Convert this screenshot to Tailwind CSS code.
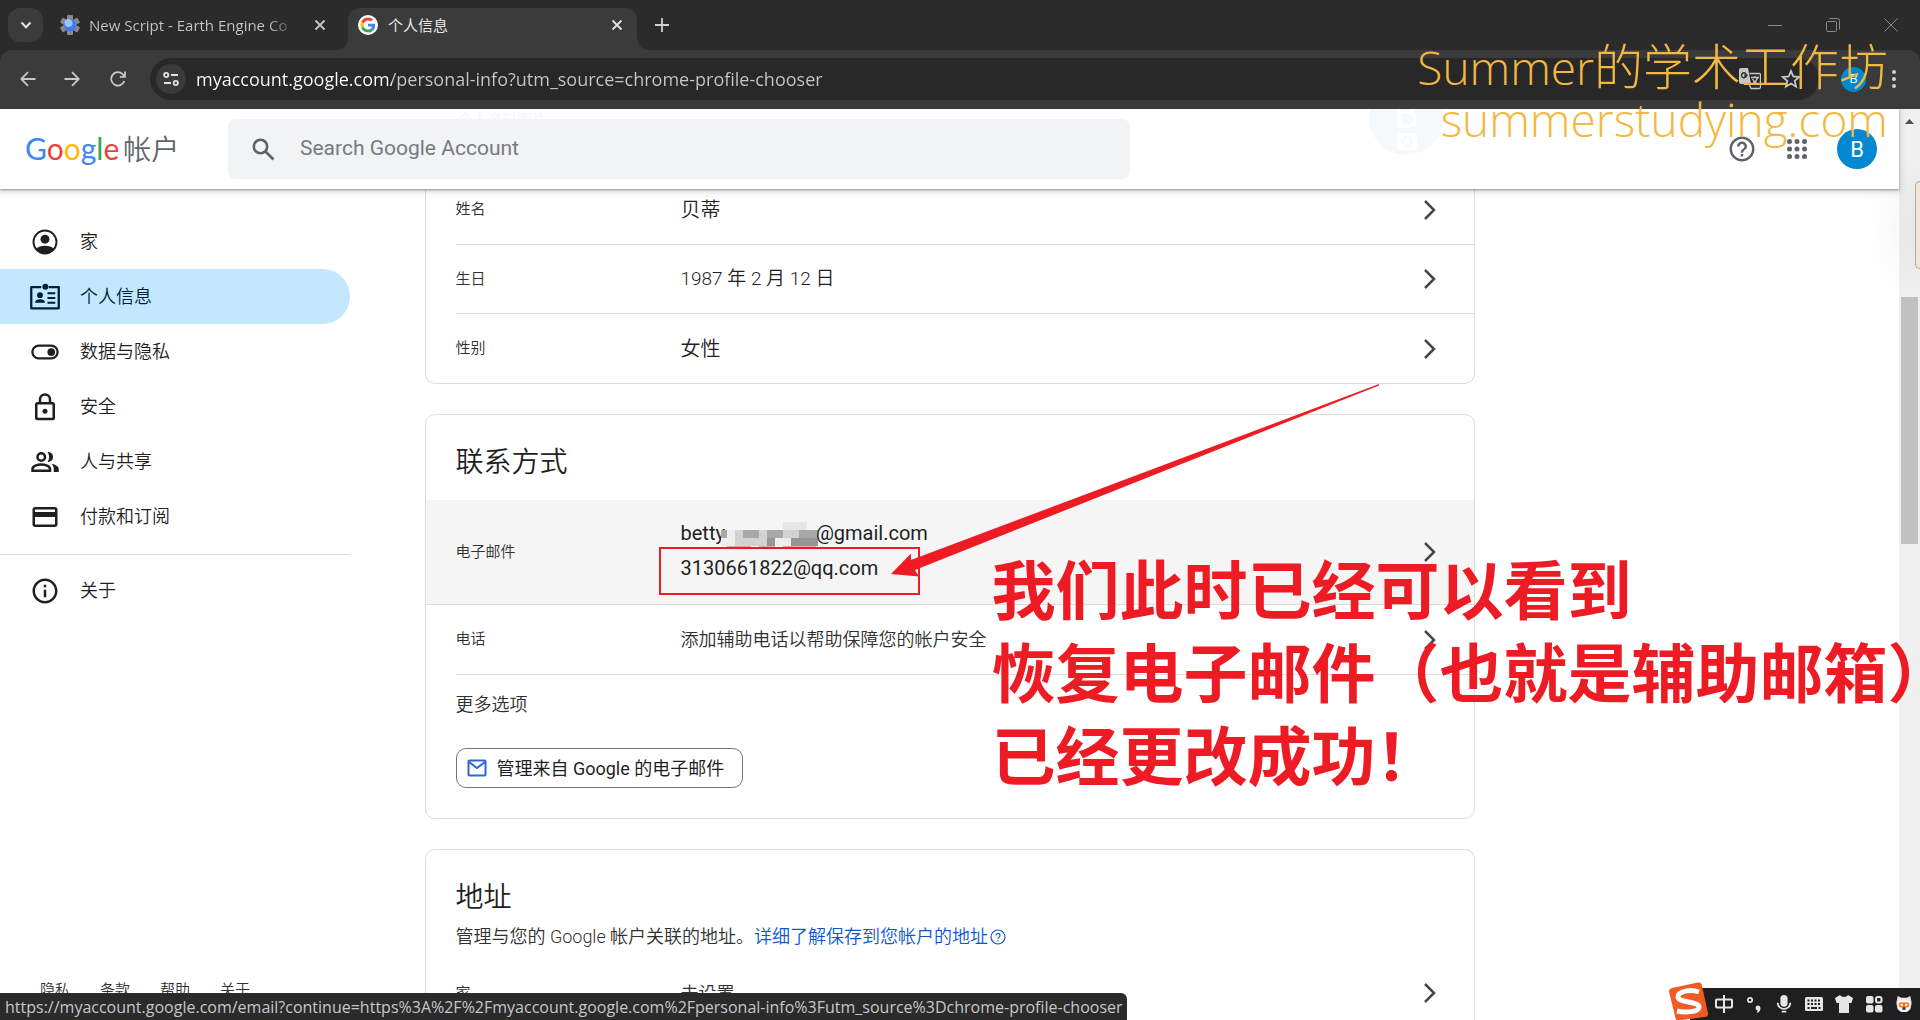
<!DOCTYPE html>
<html lang="zh-CN">
<head>
<meta charset="utf-8">
<title>个人信息</title>
<script src="https://cdn.jsdelivr.net/npm/@tailwindcss/browser@4"></script>
</head>
<body class="relative flex h-screen flex-col overflow-hidden bg-white font-[Roboto,'Noto_Sans_CJK_SC',sans-serif] text-[#1f1f1f]">

<!-- Browser chrome -->
<div class="shrink-0 bg-[#2b2b2b] font-['Open_Sans','Noto_Sans_CJK_SC',sans-serif]">
  <div class="flex h-[50px] items-stretch pl-2">
    <button aria-label="搜索标签页" class="mt-2 flex h-[34px] w-[35px] items-center justify-center rounded-xl bg-[#3b3b3b]">
      <svg class="size-3" viewBox="0 0 12 12" fill="none" stroke="#e3e3e3" stroke-width="2"><path d="M1.5 3.5 6 8.2l4.500-4.700"/></svg>
    </button>
    <div class="flex w-[305px] items-center pr-[22px] pl-4">
      <svg class="size-[22px] shrink-0" viewBox="0 0 22 22"><g fill="#8b8b8b"><rect x="8" y="1" width="6" height="20" rx="1"/><rect x="8" y="1" width="6" height="20" rx="1" transform="rotate(60 11 11)"/><rect x="8" y="1" width="6" height="20" rx="1" transform="rotate(120 11 11)"/></g><circle cx="11" cy="11" r="6.500" fill="#3f7de8"/><circle cx="9.500" cy="9" r="4" fill="#9cc3fb"/></svg>
      <span class="ml-2 w-[210px] overflow-hidden bg-linear-to-r from-[#c7c7c7] from-85% to-[#2b2b2b] bg-clip-text text-[15px] whitespace-nowrap text-transparent">New Script - Earth Engine Co</span>
      <button aria-label="关闭标签页" class="ml-auto"><svg class="size-3" viewBox="0 0 12 12" stroke="#c7c7c7" stroke-width="1.800"><path d="M1.500 1.500l9 9M10.500 1.500l-9 9"/></svg></button>
    </div>
    <div class="relative mt-2 flex w-[289px] items-center rounded-t-xl bg-[#3b3b3b] pr-3.5 pb-2 pl-2.5">
      <svg class="absolute bottom-0 -left-3 size-3" viewBox="0 0 12 12"><path d="M12 0v12H0A12 12 0 0 0 12 0z" fill="#3b3b3b"/></svg>
      <svg class="absolute -right-3 bottom-0 size-3" viewBox="0 0 12 12"><path d="M0 0v12h12A12 12 0 0 1 0 0z" fill="#3b3b3b"/></svg>
      <svg class="size-5 shrink-0" viewBox="0 0 48 48"><circle cx="24" cy="24" r="24" fill="#fff"/><g transform="translate(6 6) scale(.75)"><path fill="#ea4335" d="M24 9.500c3.540 0 6.710 1.220 9.210 3.600l6.850-6.850C35.900 2.380 30.470 0 24 0 14.620 0 6.510 5.380 2.560 13.220l7.980 6.190C12.430 13.720 17.740 9.500 24 9.500z"/><path fill="#4285f4" d="M46.980 24.550c0-1.570-.15-3.090-.38-4.550H24v9.020h12.940c-.58 2.960-2.260 5.480-4.780 7.180l7.730 6c4.510-4.180 7.090-10.360 7.090-17.650z"/><path fill="#fbbc05" d="M10.530 28.590A14.500 14.500 0 0 1 9.770 24c0-1.600.27-3.140.76-4.590l-7.980-6.190A24 24 0 0 0 0 24c0 3.880.92 7.540 2.560 10.780z"/><path fill="#34a853" d="M24 48c6.480 0 11.930-2.130 15.890-5.810l-7.730-6c-2.150 1.450-4.920 2.300-8.160 2.300-6.260 0-11.570-4.220-13.470-9.910l-7.980 6.190C6.510 42.620 14.620 48 24 48z"/></g></svg>
      <span class="ml-2.5 text-[15px] text-[#e3e3e3]">个人信息</span>
      <button aria-label="关闭标签页" class="ml-auto"><svg class="size-3" viewBox="0 0 12 12" stroke="#e3e3e3" stroke-width="1.800"><path d="M1.500 1.500l9 9M10.500 1.500l-9 9"/></svg></button>
    </div>
    <button aria-label="新标签页" class="ml-[18px]"><svg class="size-3.5" viewBox="0 0 14 14" stroke="#d0d0d0" stroke-width="1.800"><path d="M0 7h14M7 0v14"/></svg></button>
    <div class="ml-auto flex items-center gap-11 pr-[22px]">
      <button aria-label="最小化"><svg class="size-3.5" viewBox="0 0 14 14" stroke="#8a8a8a"><path d="M0 7.500h14"/></svg></button>
      <button aria-label="还原"><svg class="size-3.5" viewBox="0 0 14 14" fill="none" stroke="#8a8a8a"><rect x=".5" y="3.500" width="10" height="10" rx="1"/><path d="M3.500.5h8a2 2 0 0 1 2 2v9"/></svg></button>
      <button aria-label="关闭"><svg class="size-3.5" viewBox="0 0 14 14" stroke="#8a8a8a"><path d="M.5.5l13 13M13.500.5l-13 13"/></svg></button>
    </div>
  </div>
  <div class="flex h-[59px] items-center rounded-t-xl bg-[#3b3b3b] pr-[22px] pb-px pl-5">
    <button aria-label="后退"><svg class="size-4" viewBox="0 0 16 16" fill="none" stroke="#c7c7c7" stroke-width="1.800"><path d="M15.500 8H1.500M8 1.200 1.300 8 8 14.800"/></svg></button>
    <button aria-label="前进" class="ml-7"><svg class="size-4" viewBox="0 0 16 16" fill="none" stroke="#c7c7c7" stroke-width="1.800"><path d="M.5 8h14M8 1.200 14.700 8 8 14.800"/></svg></button>
    <button aria-label="重新加载" class="ml-[30px]"><svg class="size-4" viewBox="0 0 16 16" fill="none" stroke="#c7c7c7" stroke-width="1.800"><path d="M14.300 10A6.700 6.700 0 1 1 12.800 3.300L15 5.500M15 .5v5.300H9.800"/></svg></button>
    <div class="ml-6 flex h-[42px] flex-1 items-center rounded-full bg-[#282828] pr-[18px] pl-1.5">
      <button aria-label="查看网站信息" class="flex size-[30px] items-center justify-center rounded-full bg-[#3b3b3b]"><svg class="size-4" viewBox="0 0 16 16" fill="none" stroke="#e3e3e3" stroke-width="1.800"><circle cx="3.200" cy="4" r="2.100"/><path d="M8 4h7M1 12h7"/><circle cx="12.800" cy="12" r="2.100"/></svg></button>
      <input aria-label="地址和搜索栏" value="myaccount.google.com/personal-info?utm_source=chrome-profile-chooser" class="ml-2.5 min-w-0 flex-1 bg-linear-to-r from-white from-[196px] to-[#c7c7c7] to-[196px] bg-clip-text text-[18px] text-transparent">
      <button aria-label="翻译此页"><svg class="size-[22px]" viewBox="0 0 22 22"><path d="M2 0h7l3 16H2a2 2 0 0 1-2-2V2a2 2 0 0 1 2-2z" fill="#c7c7c7"/><path d="M10.500 5.500H20a1.500 1.500 0 0 1 1.500 1.500v12a1.500 1.500 0 0 1-1.500 1.500h-8L10.500 17M12 9.500h8M16 8v1.500M18.500 9.500c-.5 2.500-3 5-5.500 6.500M13.500 11c1 2 3 4 5 5" fill="none" stroke="#c7c7c7" stroke-width="1.300"/><path d="M8.600 7H6v1.400h1.200A2.500 2.500 0 1 1 7 5.800" fill="none" stroke="#282828" stroke-width="1.300"/></svg></button>
      <button aria-label="为此标签页添加书签" class="ml-5"><svg class="size-5" viewBox="0 0 20 20" fill="none" stroke="#c7c7c7" stroke-width="1.800"><path d="M10 2l2.300 5.500 6 .5-4.600 3.900 1.400 5.800L10 14.600l-5.100 3.100 1.400-5.800L1.700 8l6-.5z"/></svg></button>
    </div>
    <button aria-label="个人资料" class="ml-[22px] size-[25px] rounded-full bg-[#0288d1] text-[13px] text-white">B</button>
    <button aria-label="自定义及控制" class="ml-6"><svg class="h-5 w-2" viewBox="0 0 8 20" fill="#d0d0d0"><circle cx="4" cy="3" r="2"/><circle cx="4" cy="10" r="2"/><circle cx="4" cy="17" r="2"/></svg></button>
  </div>
</div>

<!-- Page with its scrollbar -->
<div class="flex min-h-0 flex-1">
  <div class="relative min-w-0 flex-1">

    <header class="relative z-10 flex h-20 items-center bg-white pr-[22px] pl-[25px] shadow-[0_1px_2px_rgba(60,64,67,0.500),0_2px_6px_2px_rgba(60,64,67,0.150)]">
      <div aria-hidden="true" class="absolute inset-0 overflow-hidden">
        <span class="absolute top-0 left-[457px] text-[15px] leading-[22px] text-[#f6f6f6]">个人资料图片</span>
        <div class="absolute -top-[29px] right-[455px] flex size-[75px] flex-col items-center justify-end rounded-full bg-[#f5f9fc] pb-1 text-[40px] text-white">
          <span class="leading-[32px]">B</span>
          <svg class="size-5" viewBox="0 0 20 20"><rect y="2" width="20" height="17" rx="2" fill="#fff"/><circle cx="10" cy="10.500" r="4.500" fill="none" stroke="#f5f9fc" stroke-width="2"/></svg>
        </div>
      </div>
      <a href="#" class="relative flex w-[203px] items-baseline leading-10 text-[#5f6368]">
        <span class="font-['Lato'] text-[30px]"><span class="text-[#4285f4]">G</span><span class="text-[#ea4335]">o</span><span class="text-[#fbbc05]">o</span><span class="text-[#4285f4]">g</span><span class="text-[#34a853]">l</span><span class="text-[#ea4335]">e</span></span>
        <span class="ml-1 text-[28px] font-[350]">帐户</span>
      </a>
      <form class="relative flex h-[60px] w-[902px] items-center rounded-lg bg-[#f1f3f4] pl-6">
        <svg class="size-[23px]" viewBox="0 0 23 23" fill="none" stroke="#5f6368" stroke-width="2.600"><circle cx="8.500" cy="8.500" r="6.700"/><path d="M13.500 13.500l8 8"/></svg>
        <input aria-label="Search Google Account" placeholder="Search Google Account" class="ml-[25px] flex-1 text-[21px] outline-none placeholder:text-[#777a7e]">
      </form>
      <nav class="relative ml-auto flex items-center">
        <button aria-label="帮助"><svg class="size-[30px]" viewBox="0 0 24 24" fill="#5f6368"><path d="M11 18h2v-2h-2v2zm1-16C6.480 2 2 6.480 2 12s4.480 10 10 10 10-4.480 10-10S17.520 2 12 2zm0 18c-4.410 0-8-3.590-8-8s3.590-8 8-8 8 3.590 8 8-3.590 8-8 8zm0-14c-2.210 0-4 1.790-4 4h2c0-1.100.9-2 2-2s2 .9 2 2c0 2-3 1.750-3 5h2c0-2.250 3-2.500 3-5 0-2.210-1.790-4-4-4z"/></svg></button>
        <button aria-label="Google 应用" class="ml-[30px]"><svg class="size-5" viewBox="0 0 20 20" fill="#5f6368"><circle cx="2.500" cy="2.500" r="2.500"/><circle cx="10" cy="2.500" r="2.500"/><circle cx="17.500" cy="2.500" r="2.500"/><circle cx="2.500" cy="10" r="2.500"/><circle cx="10" cy="10" r="2.500"/><circle cx="17.500" cy="10" r="2.500"/><circle cx="2.500" cy="17.500" r="2.500"/><circle cx="10" cy="17.500" r="2.500"/><circle cx="17.500" cy="17.500" r="2.500"/></svg></button>
        <button aria-label="Google 帐号" class="ml-[30px] size-10 rounded-full bg-[#0288d1] text-[22px] text-white">B</button>
      </nav>
    </header>

    <div class="grid grid-cols-[minmax(350px,1fr)_minmax(0,1050px)_minmax(0,1fr)]">
      <!-- Side navigation -->
      <nav class="flex w-[350px] flex-col pt-[25px] text-[18px] font-[350]">
        <a href="#" class="flex h-[55px] items-center gap-5 pl-[30px]">
          <svg class="size-[30px]" viewBox="0 0 24 24" fill="#1f1f1f"><circle cx="12" cy="12" r="9.200" fill="none" stroke="#1f1f1f" stroke-width="1.500"/><circle cx="12" cy="9.700" r="3.600"/><path d="M4.600 17.500C6.600 15.700 9 15 12 15s5.400.7 7.400 2.500A9.200 9.200 0 0 1 4.600 17.500z"/></svg>家</a>
        <a href="#" aria-current="page" class="flex h-[55px] items-center gap-5 rounded-r-full bg-[#c2e7ff] pl-[30px] text-[#001d35]">
          <svg class="size-[30px]" viewBox="0 0 24 24" fill="#001d35"><path d="M9 4H1v17h22V4h-8" fill="none" stroke="#001d35" stroke-width="1.800" stroke-linejoin="round"/><circle cx="12.300" cy="3.800" r="2.400"/><circle cx="8" cy="10.500" r="2.300"/><path d="M4 16.500c0-2 1.800-2.800 4-2.800s4 .8 4 2.800z"/><path d="M14 9h6.200M14 12.800h6.200M14 16.600h6.200" stroke="#001d35" stroke-width="1.700"/></svg>个人信息</a>
        <a href="#" class="flex h-[55px] items-center gap-5 pl-[30px]">
          <svg class="size-[30px]" viewBox="0 0 24 24" fill="#1f1f1f"><rect x="1.900" y="6.900" width="20.200" height="10.200" rx="5.100" fill="none" stroke="#1f1f1f" stroke-width="1.800"/><circle cx="17" cy="12" r="3.100"/></svg>数据与隐私</a>
        <a href="#" class="flex h-[55px] items-center gap-5 pl-[30px]">
          <svg class="size-[30px]" viewBox="0 0 24 24" fill="#1f1f1f"><rect x="5" y="9" width="14" height="12.500" rx="1" fill="none" stroke="#1f1f1f" stroke-width="2"/><path d="M8 9V6a4 4 0 0 1 8 0v3" fill="none" stroke="#1f1f1f" stroke-width="2"/><circle cx="12" cy="15.300" r="2"/></svg>安全</a>
        <a href="#" class="flex h-[55px] items-center gap-5 pl-[30px]">
          <svg class="size-[30px]" viewBox="0 0 24 24" fill="#1f1f1f"><circle cx="9" cy="8" r="3" fill="none" stroke="#1f1f1f" stroke-width="2"/><path d="M2 19v-1.500C2 15.200 6 14 9 14s7 1.200 7 3.500V19z" fill="none" stroke="#1f1f1f" stroke-width="2"/><path d="M14 4c5.500-.5 6.500 8 0 8 1.700-2.300 1.700-5.700 0-8zM17.200 13.300c3 .6 5.800 2 5.800 4.200V20h-4v-2.500c0-1.800-.7-3.200-1.800-4.200z"/></svg>人与共享</a>
        <a href="#" class="flex h-[55px] items-center gap-5 pl-[30px]">
          <svg class="size-[30px]" viewBox="0 0 24 24" fill="#1f1f1f"><path d="M20 4H4c-1.110 0-1.990.89-1.990 2L2 18c0 1.110.89 2 2 2h16c1.110 0 2-.89 2-2V6c0-1.110-.89-2-2-2zm0 14H4v-6h16v6zm0-10H4V6h16v2z"/></svg>付款和订阅</a>
        <hr class="mt-2.5 mb-2 border-[#dadce0]">
        <a href="#" class="flex h-[55px] items-center gap-5 pl-[30px]">
          <svg class="size-[30px]" viewBox="0 0 24 24" fill="#1f1f1f"><path d="M11 7h2v2h-2zm0 4h2v6h-2zm1-9C6.480 2 2 6.480 2 12s4.480 10 10 10 10-4.480 10-10S17.520 2 12 2zm0 18c-4.410 0-8-3.590-8-8s3.590-8 8-8 8 3.590 8 8-3.590 8-8 8z"/></svg>关于</a>
      </nav>

      <!-- Cards -->
      <main class="-mt-3.5 flex min-w-0 flex-col gap-[30px]">
        <section class="rounded-b-[10px] border border-t-0 border-[#dadce0] pl-[30px]">
          <a href="#" class="flex h-[70px] items-center border-b border-[#dadce0] pr-[38px]">
            <span class="w-[225px] text-[15px] font-[350] text-[#303030]">姓名</span><span class="flex-1 text-[20px] font-[350]">贝蒂</span>
            <svg class="h-5 w-3" viewBox="0 0 12 20" fill="none" stroke="#444746" stroke-width="2.500"><path d="M1 1l9 9-9 9"/></svg></a>
          <a href="#" class="flex h-[69px] items-center border-b border-[#dadce0] pr-[38px]">
            <span class="w-[225px] text-[15px] font-[350] text-[#303030]">生日</span><span class="flex-1 text-[19px] font-[350]">1987 年 2 月 12 日</span>
            <svg class="h-5 w-3" viewBox="0 0 12 20" fill="none" stroke="#444746" stroke-width="2.500"><path d="M1 1l9 9-9 9"/></svg></a>
          <a href="#" class="flex h-[69px] items-center pr-[38px]">
            <span class="w-[225px] text-[15px] font-[350] text-[#303030]">性别</span><span class="flex-1 text-[20px] font-[350]">女性</span>
            <svg class="h-5 w-3" viewBox="0 0 12 20" fill="none" stroke="#444746" stroke-width="2.500"><path d="M1 1l9 9-9 9"/></svg></a>
        </section>

        <section class="relative rounded-[10px] border border-[#dadce0] pb-[30px]">
          <h2 class="px-[30px] pt-7 pb-[17px] text-[28px] leading-10 font-[350]">联系方式</h2>
          <a href="#" class="flex h-[105px] items-center border-b border-[#dadce0] bg-[#f5f5f5] pr-[38px] pl-[30px]">
            <span class="w-[225px] text-[15px] font-[350] text-[#303030]">电子邮件</span>
            <span class="flex-1 pb-0.5 text-[20px] leading-[35px]">
              <span class="flex items-center">betty
                <svg aria-hidden="true" class="-mr-0.5 -ml-1 h-7 w-[97px]" viewBox="0 0 97 28"><rect y="10" width="97" height="16" fill="#d2d2d2"/><path d="M0 10h6v8H0zM22 10h16v8H22zM46 10h16v8H46zM78 10h19v8H78z" fill="#a8a8a8"/><path d="M62 2h24v8H62z" fill="#e6e6e6"/><path d="M46 18h8v8h-8zM70 18h27v8H70z" fill="#969696"/><path d="M6 10h8v8H6zM54 18h16v8H54zM0 18h14v8H0z" fill="#ededed"/><path d="M6 26h24v2H6zM38 26h16v2H38zM62 26h33v2H62z" fill="#f3a3aa"/></svg>@gmail.com</span>
              <span class="block">3130661822@qq.com</span>
            </span>
            <svg class="h-5 w-3" viewBox="0 0 12 20" fill="none" stroke="#444746" stroke-width="2.500"><path d="M1 1l9 9-9 9"/></svg></a>
          <a href="#" class="ml-[30px] flex h-[70px] items-center border-b border-[#dadce0] pr-[38px]">
            <span class="w-[225px] text-[15px] font-[350] text-[#303030]">电话</span><span class="flex-1 text-[18px] font-[350] text-[#303030]">添加辅助电话以帮助保障您的帐户安全</span>
            <svg class="h-5 w-3" viewBox="0 0 12 20" fill="none" stroke="#444746" stroke-width="2.500"><path d="M1 1l9 9-9 9"/></svg></a>
          <h3 class="px-[30px] pt-[15px] text-[18px] leading-[30px] font-[350] text-[#303030]">更多选项</h3>
          <button class="mt-7 ml-[30px] flex h-10 items-center gap-2.5 rounded-[10px] border border-[#747775] pr-[18px] pl-2.5 text-[18px]">
            <svg class="size-5" viewBox="0 0 20 20" fill="none" stroke="#2b66d9" stroke-width="2"><rect x="1.500" y="2.500" width="17" height="15" rx="1"/><path d="M2 4l8 6 8-6"/></svg>
            <span>管理来自 Google 的电子邮件</span>
          </button>

          <!-- Highlight box, arrow and note -->
          <div class="absolute top-[132px] left-[233px] h-12 w-[261px] border-2 border-[#ed1c24]"></div>
          <svg aria-hidden="true" class="absolute -top-[31px] left-[464px] h-[194px] w-[490px]" viewBox="0 0 490 194" fill="#ed1c24"><path d="M1 190 21 169.500 21 176 489 0 489 1.500 25 186 29 192.500z"/></svg>
          <p class="absolute top-[136px] left-[566px] z-10 text-[64px] leading-[83px] font-bold whitespace-nowrap text-[#ed1c24]">我们此时已经可以看到<br>恢复电子邮件（也就是辅助邮箱）<br>已经更改成功！</p>
        </section>

        <section class="rounded-t-[10px] border border-b-0 border-[#dadce0] px-[30px] pt-7">
          <h2 class="text-[28px] leading-10 font-[350]">地址</h2>
          <p class="mt-1 flex items-center text-[18px] leading-[30px] font-[350] text-[#303030]">管理与您的 Google 帐户关联的地址。<a href="#" class="flex items-center gap-0.5 text-[#0b57d0]">详细了解保存到您帐户的地址<svg class="size-4" viewBox="0 0 16 16" fill="none" stroke="#0b57d0" stroke-width="1.200"><circle cx="8" cy="8" r="7"/><path d="M6 6.500a2 2 0 1 1 3 1.700c-.7.400-1 .8-1 1.500M8 11v1.300"/></svg></a></p>
          <a href="#" class="mt-1.5 flex h-[70px] items-center pr-2">
            <span class="w-[225px] text-[15px] font-[350] text-[#303030]">家</span><span class="flex-1 text-[18px] font-[350] text-[#303030]">未设置</span>
            <svg class="h-5 w-3" viewBox="0 0 12 20" fill="none" stroke="#444746" stroke-width="2.500"><path d="M1 1l9 9-9 9"/></svg></a>
        </section>
      </main>
    </div>

    <footer class="absolute bottom-5 left-10 flex gap-[30px] text-[15px] leading-5 font-[350] text-[#303030]">
      <a href="#">隐私</a><a href="#">条款</a><a href="#">帮助</a><a href="#">关于</a>
    </footer>
  </div>

  <div class="relative w-[21px] shrink-0 bg-[#f0f0f0]">
    <svg class="mt-2.5 ml-1.5 h-[5px] w-[9px]" viewBox="0 0 9 5"><path d="M0 5 4.500 0 9 5z" fill="#505050"/></svg>
    <div class="mx-auto mt-[173px] h-[247px] w-[17px] bg-[#c1c1c1]"></div>
    <div class="absolute top-[72px] right-0 h-[88px] w-[5px] rounded-l-lg border border-r-0 border-[#a9a9a9] bg-[#f3e6d4] shadow-[-8px_4px_40px_rgba(0,0,0,0.300)]"></div>
  </div>
</div>

<!-- Watermark -->
<div class="absolute top-10 right-8 z-20 text-right font-['Open_Sans','Noto_Sans_CJK_SC',sans-serif] text-[46px] leading-[52px] font-light text-[#f2b840]">
  <p>Summer<span class="text-[49px]">的学术工作坊</span></p>
  <p>summerstudying.com</p>
</div>

<!-- Link target bubble -->
<div class="absolute bottom-0 left-0 z-20 flex h-[27px] items-center rounded-tr-md bg-[#2b2b2b] pr-1 pl-[5px] font-['Open_Sans',sans-serif] text-[16px] whitespace-nowrap text-[#c7c7c7]">https://myaccount.google.com/email?continue=https%3A%2F%2Fmyaccount.google.com%2Fpersonal-info%3Futm_source%3Dchrome-profile-chooser</div>

<!-- Input method toolbar -->
<div class="absolute right-0 bottom-0 z-20 flex h-8 w-[230px] items-center gap-3 bg-[#1f1f1f] pl-[25px]">
  <svg class="absolute -left-[22px] bottom-0 h-[38px] w-10" viewBox="0 0 40 38"><path d="M4 6 30 .5q3-.5 3.700 2L40 31q.5 3-2 3.700L14 38H8L1 9.500Q.5 7 4 6z" fill="#f15a22"/><path d="M31 10C23 7 10 9 10 15c0 6 21 4 21 10 0 5-14 6-22 4" fill="none" stroke="#fff" stroke-width="5"/></svg>
  <svg class="size-[18px] shrink-0" viewBox="0 0 18 18" fill="none" stroke="#e6e6e6" stroke-width="2"><rect x="1" y="4.500" width="16" height="8" rx="1"/><path d="M9 0v18"/></svg>
  <svg class="size-[18px] shrink-0" viewBox="0 0 18 18" fill="#e6e6e6"><circle cx="5" cy="5" r="2.200" fill="none" stroke="#e6e6e6" stroke-width="1.700"/><path d="M12.500 15.500a2.500 2.500 0 1 1 3-2.500c0 2.500-1 4-3.500 5z"/></svg>
  <svg class="size-[18px] shrink-0" viewBox="0 0 18 20" fill="#e6e6e6"><rect x="5" width="8" height="13" rx="4"/><path d="M2 8.500a7 7 0 0 0 14 0M6.500 18.500h5" fill="none" stroke="#e6e6e6" stroke-width="2"/></svg>
  <svg class="size-[18px] shrink-0" viewBox="0 0 18 18"><rect y="2" width="18" height="14" rx="1.500" fill="#e6e6e6"/><path d="M2.500 5.500h13M2.500 9h13" stroke="#1f1f1f" stroke-width="2" stroke-dasharray="2 1.500"/><path d="M2.500 13h2M6 13h6M13.500 13h2" stroke="#1f1f1f" stroke-width="2"/></svg>
  <svg class="size-[18px] shrink-0" viewBox="0 0 18 18" fill="#e6e6e6"><path d="M5 0c1.500 2.500 6.500 2.500 8 0l5 3-1.500 5H14v10H4V8H1.500L0 3z"/></svg>
  <svg class="size-[18px] shrink-0" viewBox="0 0 18 18" fill="#e6e6e6"><rect x="1" y="1" width="7.500" height="7.500" rx="2"/><rect x="1" y="10" width="7.500" height="7.500" rx="2"/><rect x="10" y="10" width="7.500" height="7.500" rx="2"/><rect x="11" y="2" width="5.500" height="5.500" rx="2" fill="none" stroke="#e6e6e6" stroke-width="2"/></svg>
  <svg class="size-[18px] shrink-0" viewBox="0 0 20 20"><path d="M3 1l4 2h6l4-2 1.500 8A8.500 8.500 0 1 1 1.500 9z" fill="#f4dff0"/><path d="M2 13c1 8 15 8 16 0z" fill="#a8d4f7"/><circle cx="10" cy="12" r="7" fill="#fff"/><rect x="4" y="8" width="12" height="6" rx="3" fill="#f47a20"/><circle cx="7.500" cy="11" r="1.300" fill="#fff"/><circle cx="12.500" cy="11" r="1.300" fill="#fff"/><circle cx="10" cy="15" r="2" fill="#444"/></svg>
</div>
</body>
</html>
